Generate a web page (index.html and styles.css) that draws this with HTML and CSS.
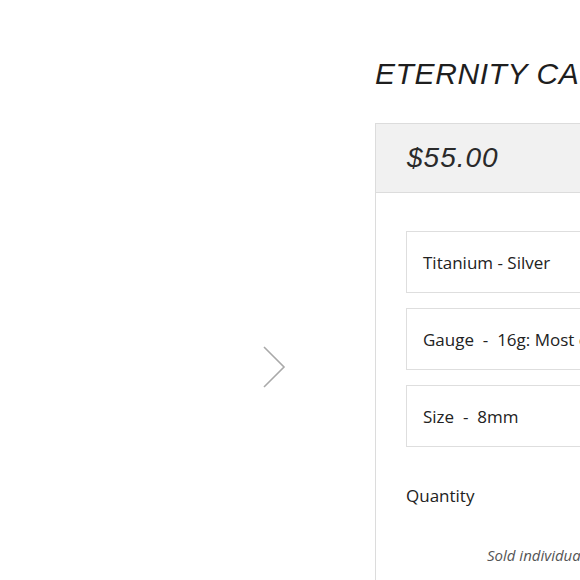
FILE: index.html
```html
<!DOCTYPE html>
<html>
<head>
<meta charset="utf-8">
<link rel="stylesheet" href="styles.css">
</head>
<body>
<div class="page">
  <div class="gallery">
    <button class="next" aria-label="Next">
      <svg width="26" height="44" viewBox="0 0 26 44"><path d="M2 2 L22 22 L2 42" fill="none" stroke="#a9a9a9" stroke-width="1.6"/></svg>
    </button>
  </div>
  <div class="product">
    <h1 class="title">ETERNITY CAPTIVE BEAD RING</h1>
    <div class="panel">
      <div class="price-bar"><span class="price">$55.00</span></div>
      <div class="panel-body">
        <div class="option">Titanium - Silver</div>
        <div class="option">Gauge&nbsp; -&nbsp; 16g: Most common</div>
        <div class="option">Size&nbsp; -&nbsp; 8mm</div>
        <div class="qty-label">Quantity</div>
        <div class="note">Sold individually</div>
      </div>
    </div>
  </div>
</div>
</body>
</html>
```
FILE: styles.css
```css
html, body {
  margin: 0;
  padding: 0;
  background: #fff;
  overflow: hidden;
}
.page {
  display: flex;
  width: 580px;
  height: 580px;
  overflow: hidden;
}
.gallery {
  flex: 0 0 375px;
  display: flex;
  justify-content: flex-end;
  padding-top: 345px;
  padding-right: 87px;
  box-sizing: border-box;
}
.next {
  border: 0;
  background: none;
  padding: 0;
  width: 26px;
  height: 44px;
  display: block;
}
.product {
  flex: 0 0 420px;
  display: flex;
  flex-direction: column;
}
.title {
  flex: 0 0 auto;
  margin: 0;
  padding-top: 56px;
  height: 123px;
  box-sizing: border-box;
  font-family: "Liberation Sans", Arial, sans-serif;
  font-style: italic;
  font-weight: 400;
  font-size: 30px;
  line-height: 36px;
  letter-spacing: 0.6px;
  color: #1e1e1e;
  white-space: nowrap;
}
.panel {
  flex: 0 0 auto;
  min-height: 500px;
  border: 1px solid #dcdcdc;
}
.price-bar {
  background: #f1f1f1;
  border-bottom: 1px solid #dcdcdc;
  height: 69px;
  box-sizing: border-box;
  padding-left: 31px;
  display: flex;
  align-items: center;
}
.price {
  font-family: "Liberation Sans", Arial, sans-serif;
  font-style: italic;
  font-size: 28px;
  letter-spacing: 1px;
  color: #2a2a2a;
}
.panel-body {
  padding: 38px 0 0 30px;
  display: flex;
  flex-direction: column;
  gap: 15px;
  font-family: "Open Sans", "Noto Sans", sans-serif;
  color: #222;
}
.option {
  height: 62px;
  box-sizing: border-box;
  border: 1px solid #dedede;
  display: flex;
  align-items: center;
  padding-left: 16px;
  font-size: 17px;
  white-space: nowrap;
}
.qty-label {
  margin-top: 22px;
  font-size: 17px;
  line-height: 24px;
}
.note {
  margin-top: 22px;
  padding-left: 81px;
  font-size: 15px;
  font-style: italic;
  color: #555;
  white-space: nowrap;
}
```
